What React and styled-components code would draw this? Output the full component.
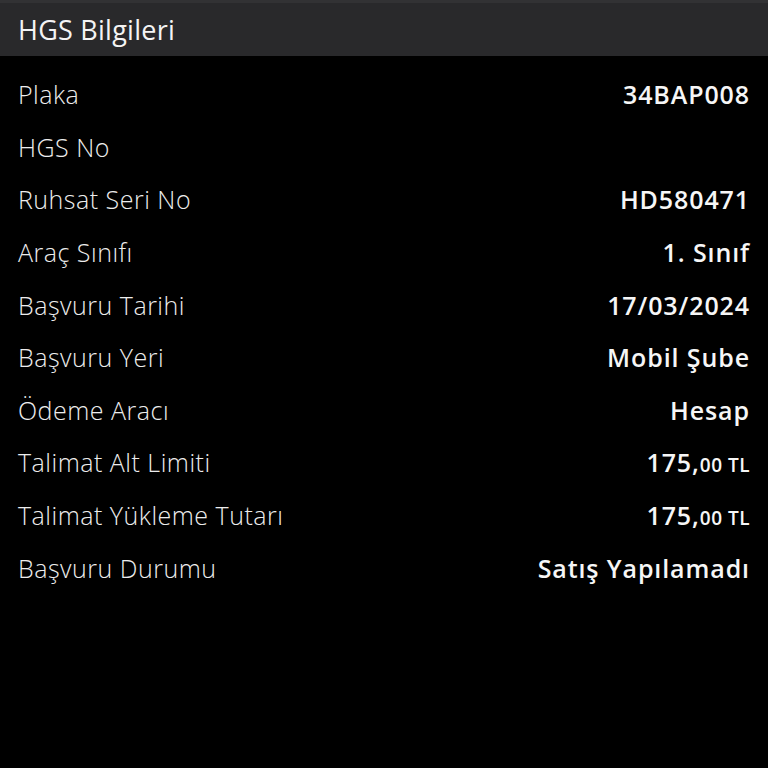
import React from "react";
import styled, { createGlobalStyle } from "styled-components";

const GlobalStyle = createGlobalStyle`
  html, body {
    margin: 0;
    padding: 0;
    background: #000;
  }
  body {
    font-family: "Open Sans", "Noto Sans", sans-serif;
    color: #f2f2f2;
  }
`;

const Screen = styled.main`
  width: 768px;
  height: 768px;
  background: #000;
  display: flex;
  flex-direction: column;
`;

const Header = styled.header`
  height: 56px;
  box-sizing: border-box;
  background: #29292b;
  border-top: 3px solid #323234;
  display: flex;
  align-items: center;
  padding: 0 18px;
  & h1 {
    margin: 0;
    font-size: 27px;
    font-weight: 400;
    letter-spacing: 0.25px;
    color: #f4f4f4;
  }
`;

const List = styled.section`
  display: flex;
  flex-direction: column;
  padding: 12px 18px 0;
`;

const Row = styled.div`
  height: 52.6px;
  display: flex;
  align-items: center;
  justify-content: space-between;
`;

const Label = styled.span`
  font-size: 25px;
  font-weight: 300;
  letter-spacing: 0.5px;
  color: #ededed;
`;

const Value = styled.span`
  font-size: 25px;
  font-weight: 600;
  letter-spacing: 0.9px;
  color: #f6f6f6;
  & small {
    font-size: 19px;
    letter-spacing: 0.5px;
  }
`;

const rows = [
  ["Plaka", "34BAP008"],
  ["HGS No", ""],
  ["Ruhsat Seri No", "HD580471"],
  ["Araç Sınıfı", "1. Sınıf"],
  ["Başvuru Tarihi", "17/03/2024"],
  ["Başvuru Yeri", "Mobil Şube"],
  ["Ödeme Aracı", "Hesap"],
  ["Talimat Alt Limiti", { amount: "175", cents: "00" }],
  ["Talimat Yükleme Tutarı", { amount: "175", cents: "00" }],
  ["Başvuru Durumu", "Satış Yapılamadı"],
];

export default function App() {
  return (
    <>
      <GlobalStyle />
      <Screen>
        <Header>
          <h1>HGS Bilgileri</h1>
        </Header>
        <List>
          {rows.map(([label, value]) => (
            <Row key={label}>
              <Label>{label}</Label>
              <Value>
                {typeof value === "object" ? (
                  <>
                    {value.amount},<small>{value.cents} TL</small>
                  </>
                ) : (
                  value
                )}
              </Value>
            </Row>
          ))}
        </List>
      </Screen>
    </>
  );
}
